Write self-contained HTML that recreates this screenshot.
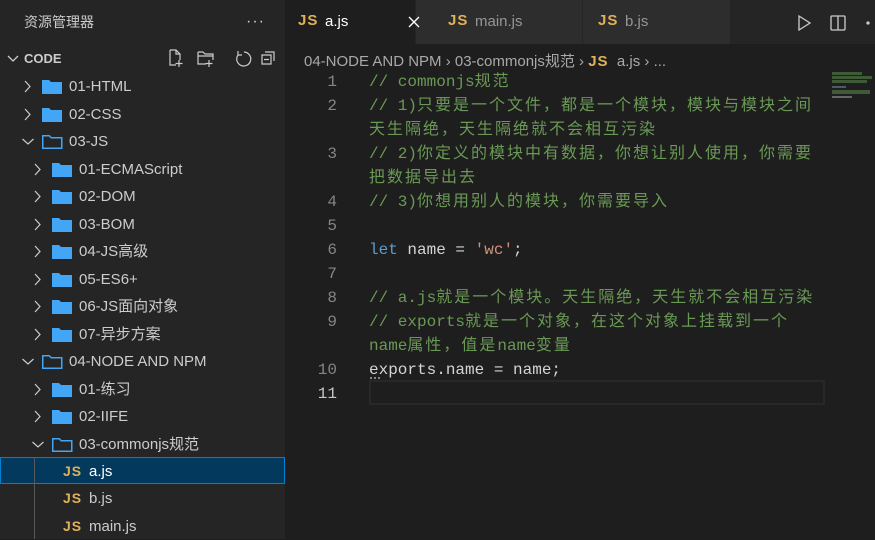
<!DOCTYPE html>
<html><head><meta charset="utf-8"><style>
*{margin:0;padding:0;box-sizing:border-box}
body{width:875px;height:539px;overflow:hidden;background:#1e1e1e;font-family:"Liberation Sans","Noto Sans CJK SC",sans-serif;position:relative}
#side{position:absolute;left:0;top:0;width:285px;height:539px;background:#252526}
.r{position:absolute;left:0;width:285px;height:27px;color:#cccccc;font-size:15px;line-height:27px;white-space:nowrap}
.r span{position:absolute}
.js{position:absolute;font-weight:bold;color:#e0b15a;font-size:14px;letter-spacing:1px}
.ab{position:absolute}
.code{position:absolute;left:369px;font-family:"Liberation Mono","Noto Sans CJK SC",monospace;font-size:16px;white-space:pre;line-height:24px}
.k{letter-spacing:2px}
.c{color:#6a9955}
.ln{position:absolute;left:300px;width:37px;text-align:right;font-family:"Liberation Mono",monospace;font-size:16px;color:#858585;line-height:24px}
</style></head><body>
<div id="side">
<div class="ab" style="left:24px;top:12px;color:#cccccc;font-size:14px">资源管理器</div>
<div class="ab" style="left:246px;top:13px;color:#ccc;font-size:16px;letter-spacing:1px">···</div>
<svg class="ab" style="left:6px;top:52px" width="14" height="14"><path d="M2 4l5 5 5-5" stroke="#ccc" fill="none" stroke-width="1.3"/></svg>
<div class="ab" style="left:24px;top:51px;color:#cccccc;font-size:13px;font-weight:bold">CODE</div>
<svg class="ab" style="left:166px;top:48px" width="110" height="20" fill="none" stroke="#ccc" stroke-width="1.2">
<path d="M4 2h6l4 4v6M4 2v15h6M10 2v4h4M13 12v7M9.5 15.5h7"/>
<path d="M32 4h5l2 2h8v6M32 4v12h8M32 8h15M43 12v7M39.5 15.5h7"/>
<path d="M78 4a7 7 0 1 1-6 3M72 3v4h4"/>
<path d="M96 7h9v9h-9zM99 4h9v9M98 11.5h5"/>
</svg>
</div>
<div class="ab" style="left:0;top:457px;width:285px;height:27px;background:#04395e;border:1px solid #007fd4"></div>
<div class="ab" style="left:34px;top:457px;width:1px;height:82px;background:#585858"></div>
<script>
const rows=[
[86,1,'c','01-HTML'],[114,1,'c','02-CSS'],[141,1,'o','03-JS'],[169,2,'c','01-ECMAScript'],[196,2,'c','02-DOM'],[224,2,'c','03-BOM'],[251,2,'c','04-JS高级'],[279,2,'c','05-ES6+'],[306,2,'c','06-JS面向对象'],[334,2,'c','07-异步方案'],[361,1,'o','04-NODE AND NPM'],[389,2,'c','01-练习'],[416,2,'c','02-IIFE'],[444,2,'o','03-commonjs规范'],[471,3,'f','a.js'],[498,3,'f','b.js'],[526,3,'f','main.js']];
let h='';
for(const [y,l,t,n] of rows){
 const top=y-13.5;
 if(t==='f'){
  h+=`<div class="r" style="top:${top}px;z-index:2"><span class="js" style="left:63px">JS</span><span style="left:89px;color:${n==='a.js'?'#fff':'#ccc'}">${n}</span></div>`;
  continue;}
 const cx=l===1?28:38, ix=l===1?42:52, tx=l===1?69:79;
 const chev=t==='c'?`<path d="M${cx-3} 8l5 5.5-5 5.5" stroke="#ccc" stroke-width="1.2" fill="none"/>`:`<path d="M${cx-5.5} 11l5.5 5 5.5-5" stroke="#ccc" stroke-width="1.2" fill="none"/>`;
 const icon=t==='c'?`<path d="M${ix} 7h7l2 2h11v12h-20z" fill="#42a5f5"/>`:`<path d="M${ix+0.75} 7.75h6.5l2 2h10.5v10.5h-19z" stroke="#42a5f5" stroke-width="1.5" fill="none"/>`;
 h+=`<div class="r" style="top:${top}px"><svg class="ab" style="left:0;top:0" width="285" height="27">${chev}${icon}</svg><span style="left:${tx}px">${n}</span></div>`;
}
document.write(h);
</script>
<div class="ab" style="left:285px;top:0;width:590px;height:44px;background:#252526"></div>
<div class="ab" style="left:285px;top:0;width:130px;height:44px;background:#1e1e1e"></div>
<div class="ab" style="left:416px;top:0;width:166px;height:44px;background:#2d2d2d"></div>
<div class="ab" style="left:583px;top:0;width:147px;height:44px;background:#2d2d2d"></div>
<div class="ab js" style="left:298px;top:12px;font-size:15px">JS</div>
<div class="ab" style="left:325px;top:13px;color:#fff;font-size:15px">a.js</div>
<svg class="ab" style="left:408px;top:16px" width="13" height="13"><path d="M1 1l10 10M11 1L1 11" stroke="#fff" stroke-width="1.4"/></svg>
<div class="ab js" style="left:448px;top:12px;font-size:15px">JS</div>
<div class="ab" style="left:475px;top:13px;color:#969696;font-size:15px">main.js</div>
<div class="ab js" style="left:598px;top:12px;font-size:15px">JS</div>
<div class="ab" style="left:625px;top:13px;color:#969696;font-size:15px">b.js</div>
<svg class="ab" style="left:795px;top:12px" width="80" height="22" fill="none" stroke="#ccc" stroke-width="1.3">
<path d="M4 4l11 7-11 7z"/><rect x="36" y="4" width="14" height="14" rx="1"/><path d="M43 4v14"/>
<circle cx="73" cy="11" r="1" fill="#ccc"/>
</svg>
<div class="ab" style="left:304px;top:50px;color:#a9a9a9;font-size:15px;white-space:nowrap">04-NODE AND NPM › 03-commonjs规范 › <b style="color:#e0b15a;letter-spacing:1px">JS</b>&nbsp; a.js › ...</div>
<div class="ln" style="top:70px">1<br>2<br><br>3<br><br>4<br>5<br>6<br>7<br>8<br>9<br><br>10<br><span style="color:#c6c6c6">11</span></div>
<div class="ab" style="left:369px;top:380px;width:456px;height:25px;border:2px solid #282828"></div>
<div class="code" style="top:70px"><span class="c">// commonjs<span class="k">规范</span>
// 1)<span class="k">只要是一个文件，都是一个模块，模块与模块之间</span>
<span class="k">天生隔绝，天生隔绝就不会相互污染</span>
// 2)<span class="k">你定义的模块中有数据，你想让别人使用，你需要</span>
<span class="k">把数据导出去</span>
// 3)<span class="k">你想用别人的模块，你需要导入</span></span>

<span style="color:#569cd6">let</span> <span style="color:#d4d4d4">name = </span><span style="color:#ce9178">'wc'</span><span style="color:#d4d4d4">;</span>

<span class="c">// a.js<span class="k">就是一个模块。天生隔绝，天生就不会相互污染</span>
// exports<span class="k">就是一个对象，在这个对象上挂载到一个</span>
name<span class="k">属性，值是</span>name<span class="k">变量</span></span>
<span style="color:#d4d4d4">exports.name = name;</span></div>
<div class="ab" style="left:370px;top:377px;width:10px;height:2px;border-top:2px dotted #888"></div>
<div class="ab" style="left:832px;top:72px;width:30px;height:3px;background:#3f5a36"></div>
<div class="ab" style="left:832px;top:76px;width:40px;height:3px;background:#3f5a36"></div>
<div class="ab" style="left:832px;top:80px;width:35px;height:3px;background:#3f5a36"></div>
<div class="ab" style="left:832px;top:86px;width:14px;height:2px;background:#4a5a6a"></div>
<div class="ab" style="left:832px;top:90px;width:38px;height:4px;background:#3f5a36"></div>
<div class="ab" style="left:832px;top:96px;width:20px;height:2px;background:#666"></div>
</body></html>
